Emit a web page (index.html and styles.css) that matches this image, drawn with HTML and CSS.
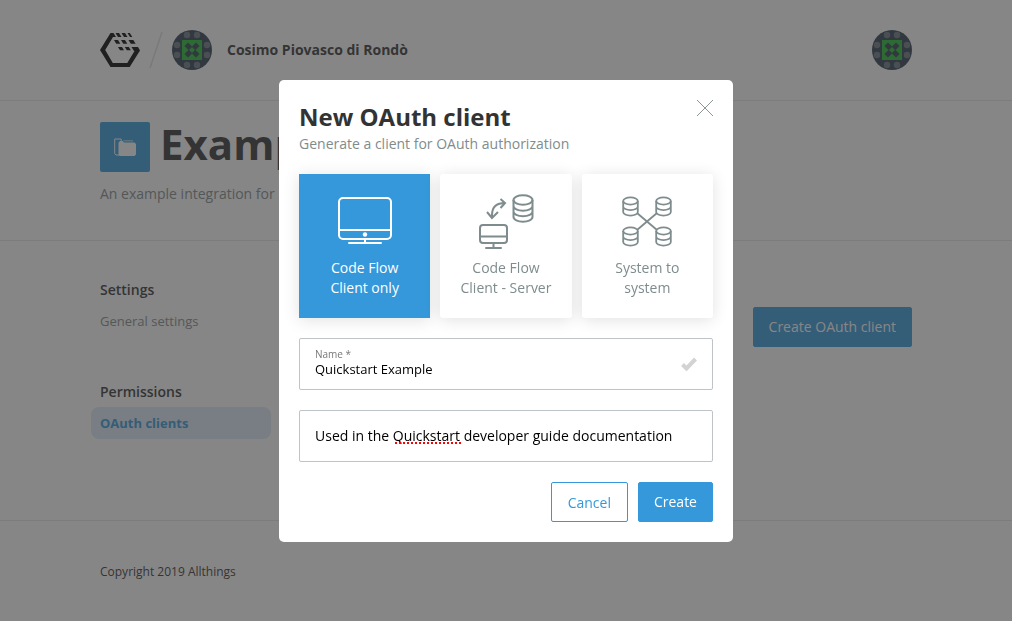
FILE: index.html
```html
<!DOCTYPE html>
<html lang="en">
<head>
<meta charset="utf-8">
<meta name="viewport" content="width=device-width, initial-scale=1">
<title>New OAuth client</title>
<link rel="stylesheet" href="styles.css">
</head>
<body>
<svg class="defs" aria-hidden="true">
  <symbol id="avatar" viewBox="0 0 40 40">
    <circle cx="20" cy="20" r="20" fill="#2c3e50"/>
    <g fill="#6a7580">
      <circle cx="15" cy="5" r="3.200"/><circle cx="25" cy="5" r="3.200"/>
      <circle cx="15" cy="35" r="3.200"/><circle cx="25" cy="35" r="3.200"/>
      <circle cx="5" cy="15" r="3.200"/><circle cx="5" cy="25" r="3.200"/>
      <circle cx="35" cy="15" r="3.200"/><circle cx="35" cy="25" r="3.200"/>
    </g>
    <path d="M10 10h20v20H10z" fill="#24b930"/>
    <path d="M16 12.500l4 4 4-4 3.500 3.500-4 4 4 4-3.500 3.500-4-4-4 4-3.500-3.500 4-4-4-4z" fill="#2c3e50"/>
    <path d="M20 17l3 3-3 3-3-3z" fill="#24b930"/>
  </symbol>
  <symbol id="database" viewBox="0 0 22 29">
    <g fill="none" stroke="currentColor" stroke-width="2">
      <ellipse cx="11" cy="6" rx="9.500" ry="4.700"/>
      <path d="M1.500 6v17c0 2.600 4.200 4.700 9.500 4.700s9.500-2.100 9.500-4.700V6M1.500 12c0 2.600 4.200 4.700 9.500 4.700s9.500-2.100 9.500-4.700M1.500 17.500c0 2.600 4.200 4.700 9.500 4.700s9.500-2.100 9.500-4.700"/>
    </g>
  </symbol>
  <symbol id="store" viewBox="0 0 17 21">
    <g fill="none" stroke="currentColor" stroke-width="1.800">
      <ellipse cx="8.500" cy="5" rx="7.300" ry="3.600"/>
      <path d="M1.200 5v11c0 2 3.200 3.600 7.300 3.600s7.300-1.600 7.300-3.600V5M1.200 10.500c0 2 3.200 3.600 7.300 3.600s7.300-1.600 7.300-3.600"/>
    </g>
  </symbol>
</svg>

<div class="page">
  <header class="topbar">
    <div class="container topbar-row">
      <svg class="logo" viewBox="0 0 40 36" aria-label="Allthings" role="img">
        <path d="M10.500 1h3l2.500 4h-3L5.200 18l7.600 13h14.500l7.200-12H34l-2.500-4H38l2 3.500L29.700 35H10.500L0 18z"/>
        <path d="M15.500 1h3.500l2.500 4H18zM21.500 1H25l2.500 4H24zM27.500 1h2.300l2.500 4H30zM14 8h4l2.300 3.700h-4zM21 8h4l2.300 3.700h-4zM28.500 8h4.800l2.300 3.700h-4.800zM18 15h4l2 3.200h-4zM24.800 15h4l2 3.200h-4z"/>
      </svg>
      <svg class="slash" viewBox="0 0 14 38" aria-hidden="true"><path d="M13 1L1 37" stroke="#e0e0e0" stroke-width="1.500"/></svg>
      <svg class="avatar" aria-hidden="true"><use href="#avatar"/></svg>
      <span class="account">Cosimo Piovasco di Rondò</span>
      <svg class="avatar avatar-user" aria-hidden="true"><use href="#avatar"/></svg>
    </div>
  </header>

  <section class="intro">
    <div class="container">
      <div class="intro-head">
        <span class="tile">
          <svg class="folder" viewBox="0 0 22 18" aria-hidden="true">
            <path d="M5 17H2L.7 15.700V1h6.500v2" fill="none" stroke="#fff"/>
            <path d="M4.500 4.500L6 3h3l1 1.500h10.500L22 6v10.500L20.500 18h-15L4.500 16.500z" fill="#fff"/>
            <path d="M9 2h10v1.500h-8.500z" fill="#fff" opacity=".5"/>
          </svg>
        </span>
        <h1 class="heading">Example</h1>
      </div>
      <p class="lead">An example integration for</p>
    </div>
  </section>

  <main class="container content">
    <nav class="sidebar">
      <h2 class="nav-title">Settings</h2>
      <a class="nav-link" href="#settings">General settings</a>
      <h2 class="nav-title nav-title-next">Permissions</h2>
      <a class="nav-link nav-link-active" href="#clients">OAuth clients</a>
    </nav>
    <button class="button button-main create-client" type="button">Create OAuth client</button>
  </main>

  <footer class="footer">
    <div class="container">Copyright 2019 Allthings</div>
  </footer>
</div>

<div class="overlay">
  <form class="dialog" role="dialog" aria-modal="true" aria-labelledby="dialog-title">
    <button class="close" type="button" aria-label="Close">
      <svg viewBox="0 0 16 16"><path d="M0 0l16 16M16 0L0 16" stroke="#8a9697" fill="none"/></svg>
    </button>
    <h2 class="dialog-title" id="dialog-title">New OAuth client</h2>
    <p class="dialog-text">Generate a client for OAuth authorization</p>

    <div class="options">
      <button class="option option-selected" type="button" aria-pressed="true">
        <svg class="option-icon" viewBox="0 0 60 60" aria-hidden="true">
          <g fill="none" stroke="currentColor" stroke-width="2">
            <rect x="4" y="6" width="52" height="41" rx="4"/>
            <path d="M4 38h52M30 47v4"/><path d="M14 51h32" stroke-linecap="round"/>
          </g>
          <circle cx="30" cy="42.500" r="2.200" fill="currentColor"/>
        </svg>
        <span>Code Flow<br>Client only</span>
      </button>
      <button class="option" type="button" aria-pressed="false">
        <svg class="option-icon" viewBox="0 0 60 60" aria-hidden="true">
          <use href="#database" x="36" y="2" width="22" height="29"/>
          <g fill="none" stroke="currentColor" stroke-width="2">
            <path d="M16 26v-3c0-8 4-12 13-12M11 20l5 6 6-6M24.500 7l4.500 4-4.500 5"/>
            <rect x="4" y="33" width="27" height="18" rx="3"/>
            <path d="M4 44.500h27M17.500 51v5"/><path d="M10 56h15" stroke-linecap="round"/>
          </g>
        </svg>
        <span>Code Flow<br>Client - Server</span>
      </button>
      <button class="option" type="button" aria-pressed="false">
        <svg class="option-icon" viewBox="0 0 60 60" aria-hidden="true">
          <path d="M20 21l20 17M40 21L20 38" stroke="currentColor" stroke-width="1.800"/>
          <use href="#store" x="5" y="4" width="17" height="21"/>
          <use href="#store" x="38" y="4" width="17" height="21"/>
          <use href="#store" x="5" y="34" width="17" height="21"/>
          <use href="#store" x="38" y="34" width="17" height="21"/>
        </svg>
        <span>System to<br>system</span>
      </button>
    </div>

    <div class="field">
      <div class="field-body">
        <label class="field-label" for="name">Name *</label>
        <input class="field-input field-input-small" id="name" type="text" value="Quickstart Example" required>
      </div>
      <svg class="check" viewBox="0 0 16 14" aria-hidden="true"><path d="M1.500 7.500L5.500 11.500 14.500 2" fill="none" stroke="#d3d3d3" stroke-width="4"/></svg>
    </div>

    <div class="field">
      <input class="field-input" type="text" aria-label="Description" value="Used in the Quickstart developer guide documentation">
      <span class="spelling" aria-hidden="true"></span>
    </div>

    <div class="actions">
      <button class="button button-outline" type="button">Cancel</button>
      <button class="button button-main" type="submit">Create</button>
    </div>
  </form>
</div>
</body>
</html>
```

FILE: styles.css
```css
* {
  box-sizing: border-box;
}

body {
  margin: 0;
  background: #fff;
  color: #333;
  font-family: "Open Sans", "Noto Sans", sans-serif;
  font-size: 14px;
  line-height: 20px;
}

h1, h2, p {
  margin: 0;
}

button, input {
  font: inherit;
}

svg {
  display: block;
  flex: none;
}

.defs {
  position: absolute;
  width: 0;
  height: 0;
}

.container {
  max-width: 1012px;
  margin: 0 auto;
  padding: 0 100px;
}

.topbar {
  padding: 30px 0;
  border-bottom: 1px solid #e3e5e5;
}

.topbar-row {
  display: flex;
  align-items: center;
}

.logo {
  width: 40px;
  height: 36px;
}

.slash {
  width: 14px;
  height: 38px;
  margin: 0 9px;
}

.avatar {
  width: 40px;
  height: 40px;
}

.account {
  margin-left: 15px;
  font-weight: 700;
}

.avatar-user {
  margin-left: auto;
}

.intro {
  padding: 15px 0 36px;
  border-bottom: 1px solid #e3e5e5;
}

.intro-head {
  display: flex;
  align-items: center;
  gap: 10px;
}

.tile {
  display: grid;
  place-items: center;
  width: 50px;
  height: 50px;
  margin-top: 6px;
  border-radius: 2px;
  background: #3498db;
}

.folder {
  width: 22px;
  height: 18px;
}

.heading {
  font-size: 42px;
  line-height: 56px;
  white-space: nowrap;
}

.lead {
  margin-top: 12px;
  color: #7f8c8d;
}

.content {
  display: flex;
  justify-content: space-between;
  align-items: flex-start;
  padding-top: 39px;
  padding-bottom: 81px;
}

.sidebar {
  width: 180px;
  margin-left: -9px;
}

.nav-title {
  padding-left: 9px;
  font-size: 14px;
  font-weight: 600;
  line-height: 20px;
}

.nav-title-next {
  margin-top: 45px;
}

.nav-link {
  display: block;
  margin-top: 5px;
  padding: 6px 9px;
  border-radius: 8px;
  color: #7f8c8d;
  font-size: 13px;
  text-decoration: none;
}

.nav-link-active {
  background: #dcebf7;
  color: #3498db;
  font-weight: 700;
}

.create-client {
  margin-top: 27px;
}

.footer {
  padding: 41px 0;
  border-top: 1px solid #e3e5e5;
  font-size: 12px;
}

.button {
  height: 40px;
  padding: 0 15px;
  border: 1px solid #3498db;
  border-radius: 2px;
}

.button-main {
  background: #3498db;
  color: #fff;
}

.button-outline {
  padding: 2px 16px 0;
  background: #fff;
  color: #3498db;
}

.overlay {
  position: fixed;
  inset: 0;
  display: flex;
  align-items: center;
  justify-content: center;
  background: rgba(53, 53, 53, 0.6);
}

.dialog {
  position: relative;
  width: 454px;
  max-width: 100%;
  padding: 20px;
  border-radius: 5px;
  background: #fff;
}

.close {
  position: absolute;
  top: 20px;
  right: 20px;
  padding: 0;
  border: 0;
  background: none;
}

.close svg {
  width: 16px;
  height: 16px;
}

.dialog-title {
  font-size: 24px;
  line-height: 34px;
}

.dialog-text {
  color: #7f8c8d;
}

.options {
  display: grid;
  grid-template-columns: repeat(3, 1fr);
  gap: 10px;
  margin-top: 20px;
}

.option {
  display: flex;
  flex-direction: column;
  align-items: center;
  justify-content: flex-start;
  gap: 6px;
  height: 144px;
  padding: 18px 10px 16px;
  border: 0;
  border-radius: 3px;
  background: #fff;
  box-shadow: 0 2px 16px rgba(0, 0, 0, 0.12);
  color: #7f8c8d;
}

.option-selected {
  border-radius: 0;
  background: #3498db;
  color: #fff;
}

.option-icon {
  width: 60px;
  height: 60px;
}

.field {
  position: relative;
  display: flex;
  align-items: center;
  height: 52px;
  margin-top: 20px;
  padding: 0 15px;
  border: 1px solid #bdc3c7;
  border-radius: 2px;
}

.field-body {
  flex: 1;
  padding-bottom: 2px;
}

.field-label {
  display: block;
  color: #777;
  font-size: 10px;
  line-height: 12px;
}

.field-input {
  display: block;
  width: 100%;
  padding: 0;
  border: 0;
  outline: 0;
  background: none;
  color: #000;
  line-height: 20px;
}

.field-input-small {
  font-size: 13px;
  line-height: 18px;
}

.check {
  width: 16px;
  height: 14px;
}

.spelling {
  position: absolute;
  top: 31px;
  left: 95px;
  width: 66px;
  border-top: 2px dotted #f00;
}

.actions {
  display: flex;
  justify-content: flex-end;
  gap: 10px;
  margin-top: 20px;
}
```
